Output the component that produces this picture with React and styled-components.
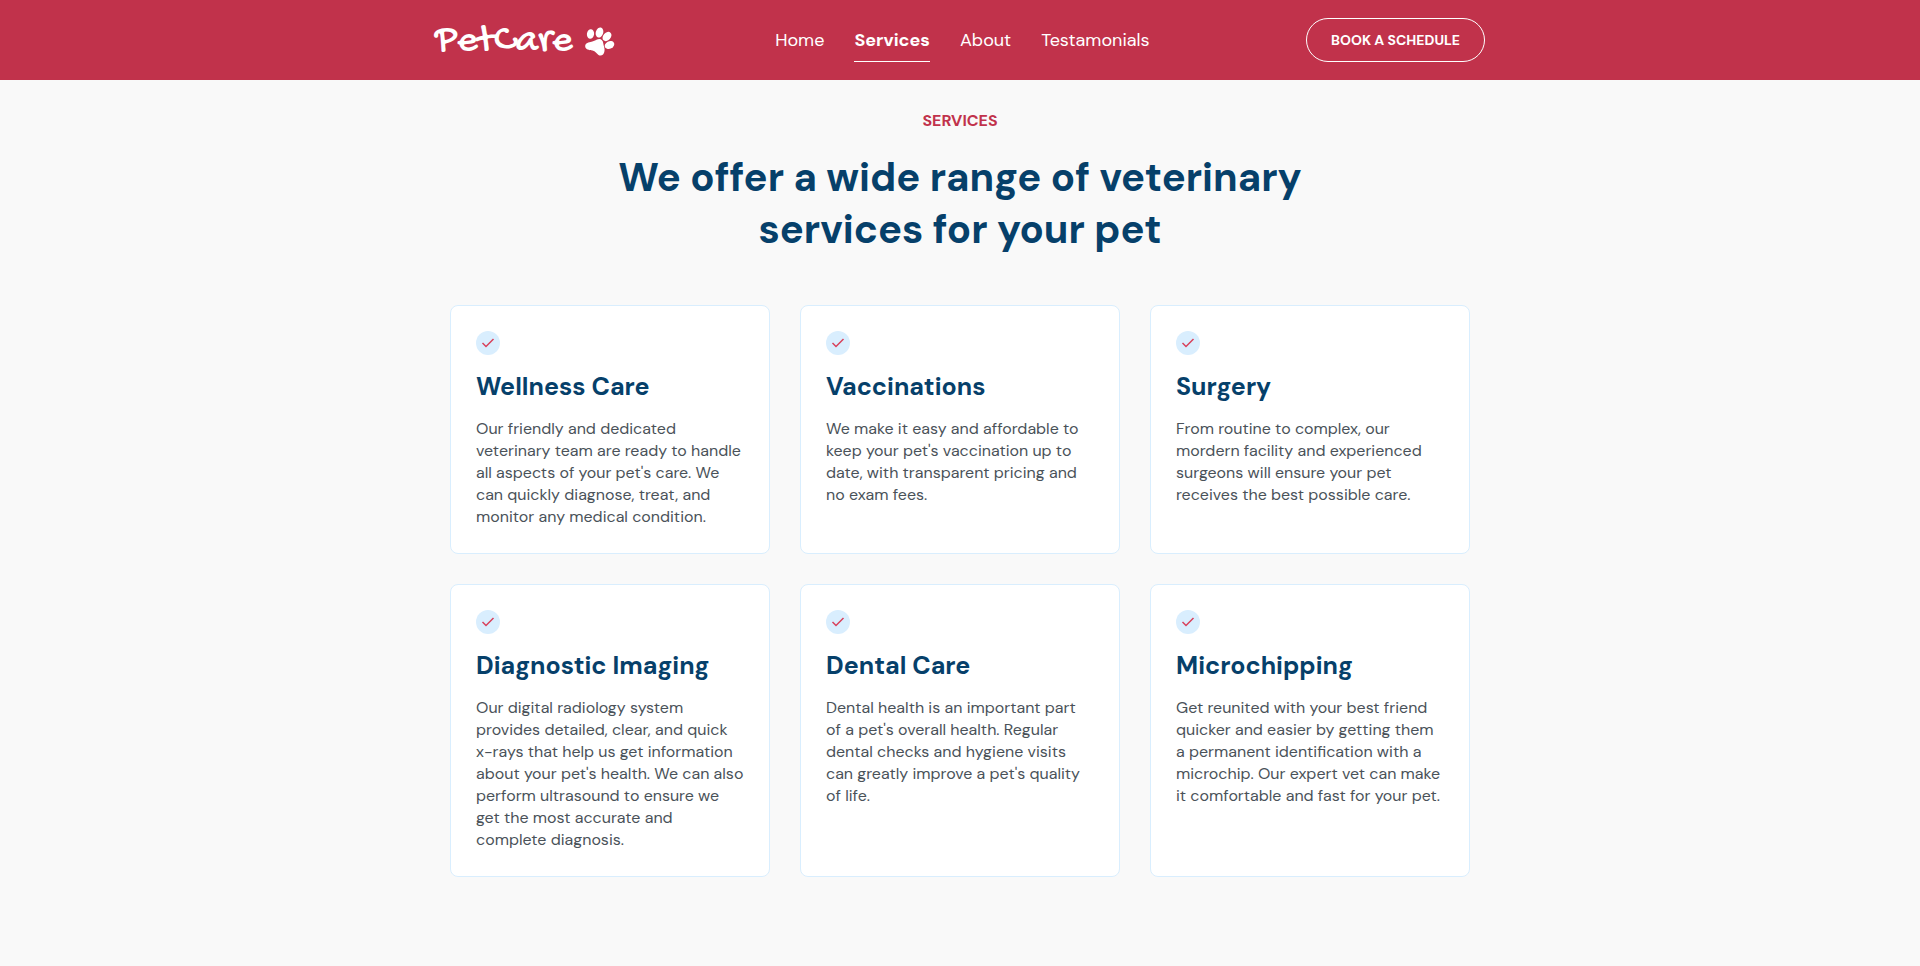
import React from "react";
import styled, { createGlobalStyle } from "styled-components";

const GlobalStyle = createGlobalStyle`
  * {
    box-sizing: border-box;
    margin: 0;
    padding: 0;
  }

  body {
    background-color: #f9f9f9;
    color: #4a5259;
    font-family: "DM Sans", Inter, sans-serif;
    font-size: 16px;
    line-height: 22px;
    -webkit-font-smoothing: antialiased;
  }
`;

const Header = styled.header`
  background-color: #c1324b;
  padding: 0 15px;
`;

const HeaderContent = styled.div`
  max-width: 1050px;
  min-height: 80px;
  margin: 0 auto;
  display: flex;
  align-items: center;
  justify-content: space-between;
`;

const Logo = styled.a`
  display: flex;
  align-items: center;
  gap: 12px;
  padding: 4px 4px 0 0;
  color: #fff;
  font-family: "Gochi Hand", "Patrick Hand", cursive;
  font-size: 40px;
  line-height: 40px;
  text-decoration: none;
`;

const Menu = styled.nav`
  display: flex;
  gap: 30px;
`;

const MenuLink = styled.a`
  padding: 8px 0;
  color: #fff;
  font-size: 18px;
  line-height: 26px;
  font-weight: ${(props) => (props.$active ? 700 : 400)};
  border-bottom: 1px solid ${(props) => (props.$active ? "#fff" : "transparent")};
  text-decoration: none;
`;

const ScheduleButton = styled.button`
  padding: 10px 24px;
  background-color: transparent;
  border: 1px solid #fff;
  border-radius: 22px;
  color: #fff;
  font-family: inherit;
  font-size: 14px;
  font-weight: 700;
  line-height: 22px;
  text-transform: uppercase;
  cursor: pointer;
`;

const Section = styled.section`
  max-width: 1050px;
  margin: 0 auto;
  padding: 30px 15px 89px;
`;

const SectionHeader = styled.div`
  display: flex;
  flex-direction: column;
  align-items: center;
  gap: 19px;
  margin-bottom: 50px;
  text-align: center;
`;

const SectionLabel = styled.p`
  color: #c1324b;
  font-weight: 700;
  line-height: 22px;
  text-transform: uppercase;
`;

const SectionTitle = styled.h1`
  max-width: 750px;
  color: #06406a;
  font-size: 40px;
  font-weight: 700;
  line-height: 52px;
`;

const Cards = styled.div`
  display: grid;
  grid-template-columns: repeat(auto-fit, minmax(300px, 1fr));
  gap: 30px;
`;

const Card = styled.article`
  padding: 25px;
  background-color: #fff;
  border: 1px solid #d9eefe;
  border-radius: 8px;
`;

const CardTitle = styled.h2`
  margin: 15px 0;
  color: #06406a;
  font-size: 25px;
  font-weight: 700;
  line-height: 33px;
`;

const CheckIcon = styled.svg`
  display: block;
  width: 24px;
  height: 24px;
`;

const services = [
  {
    title: "Wellness Care",
    text: "Our friendly and dedicated veterinary team are ready to handle all aspects of your pet's care. We can quickly diagnose, treat, and monitor any medical condition.",
  },
  {
    title: "Vaccinations",
    text: "We make it easy and affordable to keep your pet's vaccination up to date, with transparent pricing and no exam fees.",
  },
  {
    title: "Surgery",
    text: "From routine to complex, our mordern facility and experienced surgeons will ensure your pet receives the best possible care.",
  },
  {
    title: "Diagnostic Imaging",
    text: "Our digital radiology system provides detailed, clear, and quick x-rays that help us get information about your pet's health. We can also perform ultrasound to ensure we get the most accurate and complete diagnosis.",
  },
  {
    title: "Dental Care",
    text: "Dental health is an important part of a pet's overall health. Regular dental checks and hygiene visits can greatly improve a pet's quality of life.",
  },
  {
    title: "Microchipping",
    text: "Get reunited with your best friend quicker and easier by getting them a permanent identification with a microchip. Our expert vet can make it comfortable and fast for your pet.",
  },
];

const menu = ["Home", "Services", "About", "Testamonials"];

const Paw = () => (
  <svg width="30" height="30" viewBox="0 0 30 30" fill="currentColor" aria-hidden="true">
    <ellipse cx="5.5" cy="7" rx="3.6" ry="4.8" transform="rotate(8 5.5 7)" />
    <ellipse cx="14.5" cy="5.500" rx="3.700" ry="5.200" transform="rotate(16 14.5 5.5)" />
    <ellipse cx="22" cy="9.5" rx="3.800" ry="5.200" transform="rotate(42 22 9.5)" />
    <ellipse cx="24.5" cy="18" rx="3.800" ry="5" transform="rotate(62 24.5 18)" />
    <path d="M12 12.500C15 11.100 18 12.500 18.300 16.500C18.500 19 20 21 19.500 24C19 28 16 29.500 13.500 28C11.500 26.700 10.500 24.300 7.500 23.600C4 23 .4 22.500.2 19.500C0 16 4 15.400 6.500 14.800C8.800 14.300 10 13.500 12 12.500Z" />
  </svg>
);

const App = () => {
  return (
    <>
      <GlobalStyle />
      <Header>
        <HeaderContent>
          <Logo href="#home">
            PetCare <Paw />
          </Logo>
          <Menu>
            {menu.map((item) => (
              <MenuLink key={item} href={`#${item.toLowerCase()}`} $active={item === "Services"}>
                {item}
              </MenuLink>
            ))}
          </Menu>
          <ScheduleButton type="button">Book a schedule</ScheduleButton>
        </HeaderContent>
      </Header>
      <main>
        <Section id="services">
          <SectionHeader>
            <SectionLabel>Services</SectionLabel>
            <SectionTitle>We offer a wide range of veterinary services for your pet</SectionTitle>
          </SectionHeader>
          <Cards>
            {services.map((service) => (
              <Card key={service.title}>
                <CheckIcon viewBox="0 0 24 24" aria-hidden="true">
                  <circle cx="12" cy="12" r="12" fill="#d9eefe" />
                  <path d="M6.500 12L10 15.500L17.500 8" fill="none" stroke="#d8405b" strokeWidth="1.500" />
                </CheckIcon>
                <CardTitle>{service.title}</CardTitle>
                <p>{service.text}</p>
              </Card>
            ))}
          </Cards>
        </Section>
      </main>
    </>
  );
};

export default App;
